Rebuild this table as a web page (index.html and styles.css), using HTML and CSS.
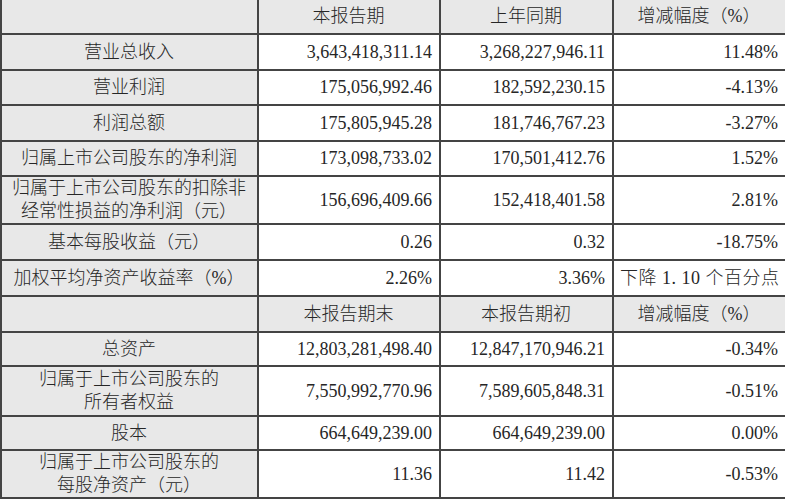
FILE: index.html
```html
<!DOCTYPE html>
<html lang="zh-CN">
<head>
<meta charset="utf-8">
<title>主要会计数据</title>
<link rel="stylesheet" href="styles.css">
</head>
<body>
<table class="fin">
  <colgroup>
    <col class="c-label">
    <col class="c-num1">
    <col class="c-num2">
    <col class="c-num3">
  </colgroup>
  <tr class="head r35">
    <td class="label"></td>
    <td class="hd">本报告期</td>
    <td class="hd">上年同期</td>
    <td class="hd">增减幅度（%）</td>
  </tr>
  <tr class="r36">
    <td class="label">营业总收入</td>
    <td class="num">3,643,418,311.14</td>
    <td class="num">3,268,227,946.11</td>
    <td class="num">11.48%</td>
  </tr>
  <tr class="r35">
    <td class="label">营业利润</td>
    <td class="num">175,056,992.46</td>
    <td class="num">182,592,230.15</td>
    <td class="num">-4.13%</td>
  </tr>
  <tr class="r36">
    <td class="label">利润总额</td>
    <td class="num">175,805,945.28</td>
    <td class="num">181,746,767.23</td>
    <td class="num">-3.27%</td>
  </tr>
  <tr class="r35">
    <td class="label">归属上市公司股东的净利润</td>
    <td class="num">173,098,733.02</td>
    <td class="num">170,501,412.76</td>
    <td class="num">1.52%</td>
  </tr>
  <tr class="r48">
    <td class="label two">归属于上市公司股东的扣除非<br>经常性损益的净利润（元）</td>
    <td class="num">156,696,409.66</td>
    <td class="num">152,418,401.58</td>
    <td class="num">2.81%</td>
  </tr>
  <tr class="r36">
    <td class="label">基本每股收益（元）</td>
    <td class="num">0.26</td>
    <td class="num">0.32</td>
    <td class="num">-18.75%</td>
  </tr>
  <tr class="r36">
    <td class="label">加权平均净资产收益率（%）</td>
    <td class="num">2.26%</td>
    <td class="num">3.36%</td>
    <td class="num cjk">下降 1. 10 个百分点</td>
  </tr>
  <tr class="head r36">
    <td class="label"></td>
    <td class="hd">本报告期末</td>
    <td class="hd">本报告期初</td>
    <td class="hd">增减幅度（%）</td>
  </tr>
  <tr class="r34">
    <td class="label">总资产</td>
    <td class="num">12,803,281,498.40</td>
    <td class="num">12,847,170,946.21</td>
    <td class="num">-0.34%</td>
  </tr>
  <tr class="r50">
    <td class="label two">归属于上市公司股东的<br>所有者权益</td>
    <td class="num">7,550,992,770.96</td>
    <td class="num">7,589,605,848.31</td>
    <td class="num">-0.51%</td>
  </tr>
  <tr class="r34">
    <td class="label">股本</td>
    <td class="num">664,649,239.00</td>
    <td class="num">664,649,239.00</td>
    <td class="num">0.00%</td>
  </tr>
  <tr class="r46">
    <td class="label two">归属于上市公司股东的<br>每股净资产（元）</td>
    <td class="num">11.36</td>
    <td class="num">11.42</td>
    <td class="num">-0.53%</td>
  </tr>
</table>
</body>
</html>
```

FILE: styles.css
```css
html, body {
  margin: 0;
  padding: 0;
  background: #ffffff;
}

.fin {
  border-collapse: collapse;
  table-layout: fixed;
  width: 785px;
  font-family: "Liberation Serif", "Noto Sans CJK SC", serif;
  font-size: 18px;
  font-weight: 300;
  color: #262626;
  border-top: 0 none;
}

.c-label { width: 257px; }
.c-num1 { width: 182px; }
.c-num2 { width: 173px; }
.c-num3 { width: 173px; }

.fin td {
  border: 2px solid #444444;
  padding: 0 7px 0 6px;
  line-height: 23px;
  white-space: nowrap;
  vertical-align: middle;
}

.fin tr:first-child td {
  border-top: 0 none;
}

.label {
  background: #e8e8e8;
  text-align: center;
}

.head td {
  background: #e8e8e8;
}

.hd {
  text-align: center;
}

.num {
  text-align: right;
}

.cjk {
  padding-right: 6px;
  letter-spacing: 0.5px;
}

.r34 td { height: 32px; }
.r35 td { height: 33px; }
.r36 td { height: 34px; }
.r46 td { height: 44px; }
.r48 td { height: 46px; }
.r50 td { height: 48px; }
```
